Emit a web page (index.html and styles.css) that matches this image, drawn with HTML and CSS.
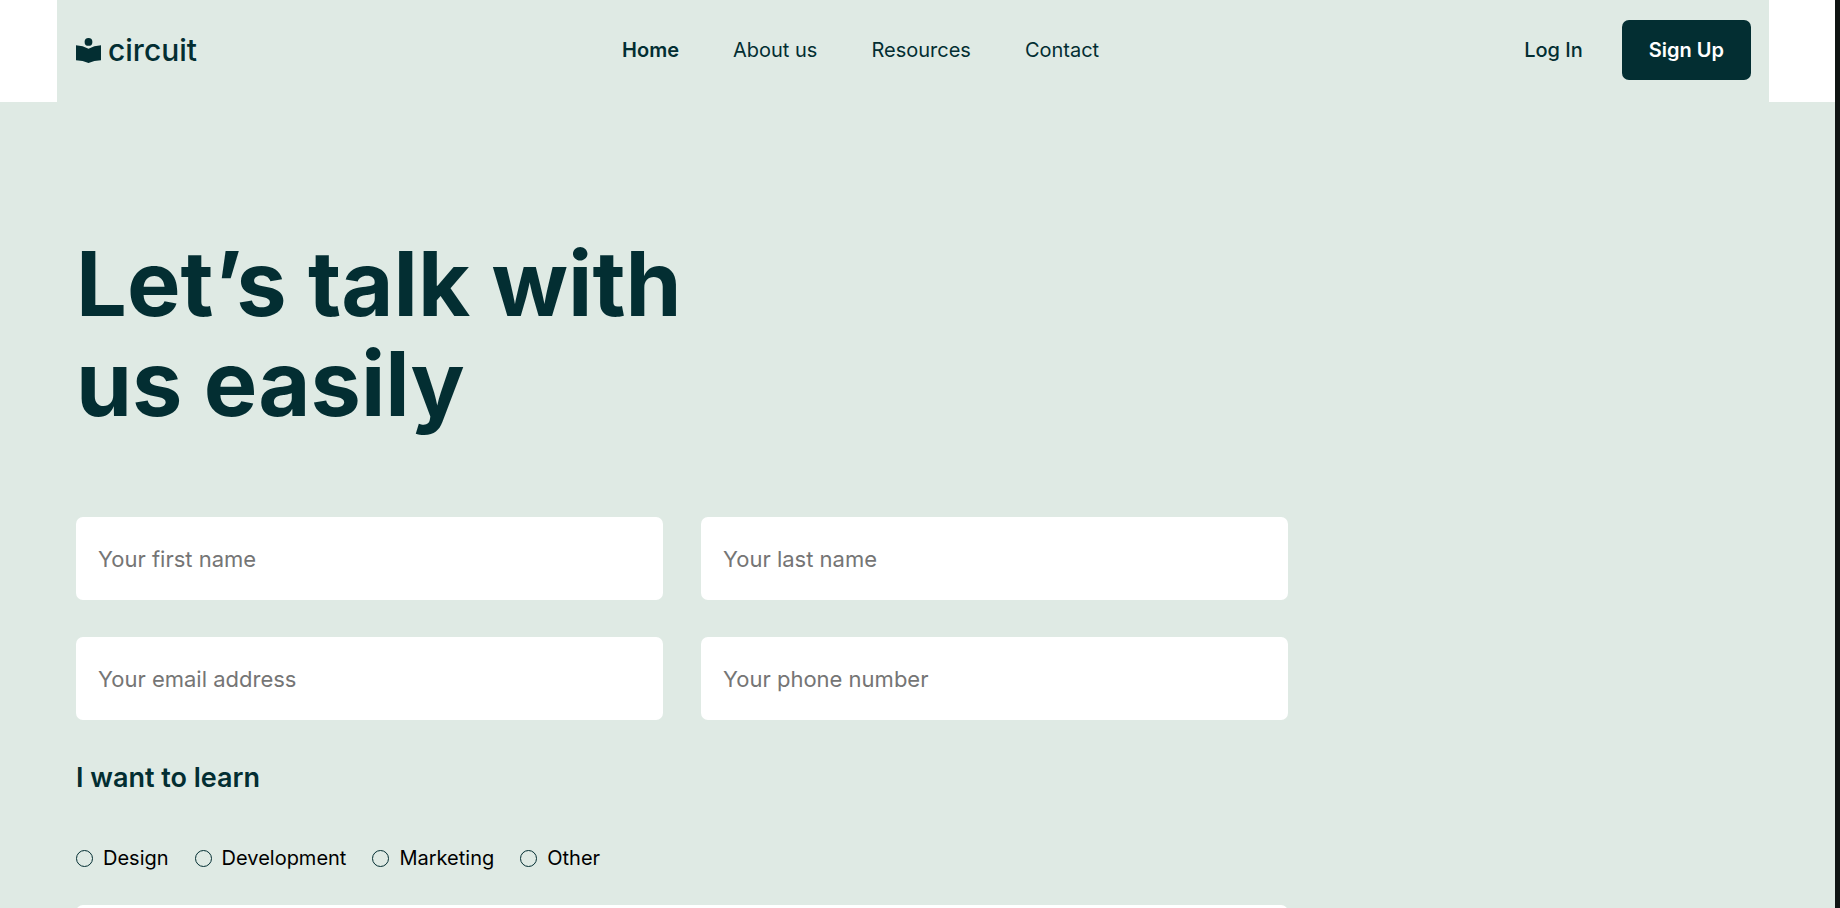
FILE: index.html
```html
<!DOCTYPE html>
<html lang="en">
<head>
<meta charset="utf-8">
<meta name="viewport" content="width=device-width, initial-scale=1">
<title>Circuit – Contact</title>
<link rel="stylesheet" href="styles.css">
</head>
<body class="page">
  <header class="header">
    <a class="logo" href="#">
      <svg class="logo-icon" viewBox="0 0 25 25" aria-hidden="true">
        <circle cx="12.5" cy="3.9" r="3.9"/>
        <path d="M0 7.2Q7 7.6 12.5 10.8Q18 7.6 25 7.2V22.2Q18 22.2 12.5 25Q7 22.2 0 22.2Z"/>
      </svg>
      <span>circuit</span>
    </a>
    <nav class="nav">
      <a class="nav-link nav-link-active" href="#">Home</a>
      <a class="nav-link" href="#">About us</a>
      <a class="nav-link" href="#">Resources</a>
      <a class="nav-link" href="#">Contact</a>
    </nav>
    <div class="actions">
      <a class="login" href="#">Log In</a>
      <button class="signup" type="button">Sign Up</button>
    </div>
  </header>
  <main class="contact">
    <h1 class="title">Let’s talk with<br>us easily</h1>
    <form class="form">
      <div class="fields">
        <input class="field" type="text" placeholder="Your first name" aria-label="Your first name">
        <input class="field" type="text" placeholder="Your last name" aria-label="Your last name">
        <input class="field" type="email" placeholder="Your email address" aria-label="Your email address">
        <input class="field" type="tel" placeholder="Your phone number" aria-label="Your phone number">
      </div>
      <h2 class="subtitle" id="topic">I want to learn</h2>
      <div class="options" role="radiogroup" aria-labelledby="topic">
        <label class="option"><input class="radio" type="radio" name="topic">Design</label>
        <label class="option"><input class="radio" type="radio" name="topic">Development</label>
        <label class="option"><input class="radio" type="radio" name="topic">Marketing</label>
        <label class="option"><input class="radio" type="radio" name="topic">Other</label>
      </div>
      <textarea class="message" aria-label="Message"></textarea>
    </form>
  </main>
</body>
</html>
```
FILE: styles.css
```css
* { box-sizing: border-box; }

.page {
  margin: 0;
  height: 100vh;
  overflow: hidden;
  border-right: 5px solid #101413;
  background: #fff;
  color: #032e32;
  font-family: Inter, "Liberation Sans", sans-serif;
  font-size: 20px;
  font-weight: 400;
  line-height: 24px;
}

a { color: inherit; text-decoration: none; }

.header {
  display: flex;
  align-items: center;
  justify-content: space-between;
  margin: 0 66px 0 57px;
  padding: 20px 18px 22px 19px;
  background: #dfeae4;
}

.logo {
  display: flex;
  align-items: center;
  gap: 7px;
  font-size: 30px;
  font-weight: 500;
}

.logo-icon { width: 25px; height: 25px; fill: currentColor; }

.nav { display: flex; gap: 54px; }
.nav-link-active { font-weight: 600; }

.actions { display: flex; align-items: center; gap: 39px; }
.login { font-weight: 500; }

.signup {
  height: 60px;
  padding: 0 27px;
  border: 0;
  border-radius: 7px;
  background: #032e32;
  color: #fff;
  font: inherit;
  font-weight: 600;
}

.contact {
  padding: 132px 66px 80px 76px;
  background: #dfeae4;
}

.title {
  margin: 0 0 83px;
  font-size: 90px;
  line-height: 100px;
  font-weight: 700;
}

.form { max-width: 1212px; }

.fields {
  display: grid;
  grid-template-columns: 1fr 1fr;
  gap: 37px 38px;
}

.field, .message {
  width: 100%;
  padding: 0 22px;
  border: 0;
  border-radius: 7px;
  background: #fff;
  font: inherit;
  font-size: 22px;
}

.field { height: 83px; }
.field::placeholder { color: #757575; }

.subtitle {
  margin: 40px 0 50px;
  font-size: 27px;
  line-height: 36px;
  font-weight: 600;
}

.options { display: flex; gap: 26px; color: #000; }
.option { display: flex; align-items: center; gap: 10px; }

.radio {
  appearance: none;
  width: 17px;
  height: 17px;
  margin: 0;
  border: 1px solid #032e32;
  border-radius: 50%;
}

.message {
  display: block;
  height: 220px;
  margin-top: 35px;
  padding: 22px;
}
```
